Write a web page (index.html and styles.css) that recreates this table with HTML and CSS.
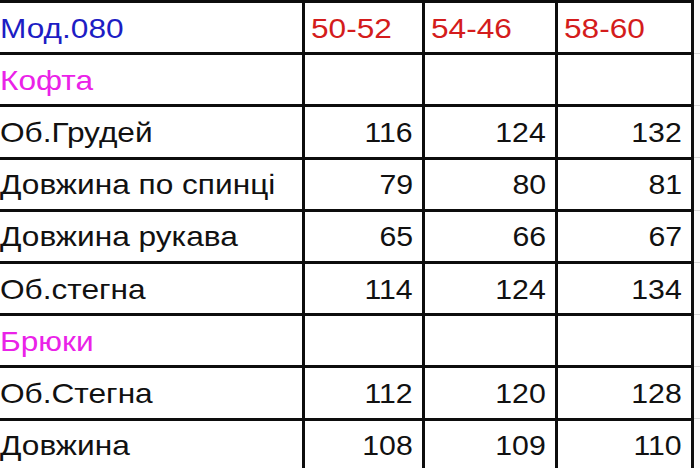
FILE: index.html
```html
<!DOCTYPE html>
<html lang="uk">
<head>
<meta charset="utf-8">
<title>Мод.080</title>
<link rel="stylesheet" href="styles.css">
</head>
<body>
<div class="sheet">
  <div class="grid">
    <div class="cell label model"><span class="t">Мод.080</span></div>
    <div class="cell size"><span class="t">50-52</span></div>
    <div class="cell size"><span class="t">54-46</span></div>
    <div class="cell size"><span class="t">58-60</span></div>

    <div class="cell label section"><span class="t">Кофта</span></div>
    <div class="cell"></div>
    <div class="cell"></div>
    <div class="cell"></div>

    <div class="cell label"><span class="t">Об.Грудей</span></div>
    <div class="cell num"><span class="t">116</span></div>
    <div class="cell num"><span class="t">124</span></div>
    <div class="cell num"><span class="t">132</span></div>

    <div class="cell label"><span class="t">Довжина по спинці</span></div>
    <div class="cell num"><span class="t">79</span></div>
    <div class="cell num"><span class="t">80</span></div>
    <div class="cell num"><span class="t">81</span></div>

    <div class="cell label"><span class="t">Довжина рукава</span></div>
    <div class="cell num"><span class="t">65</span></div>
    <div class="cell num"><span class="t">66</span></div>
    <div class="cell num"><span class="t">67</span></div>

    <div class="cell label"><span class="t">Об.стегна</span></div>
    <div class="cell num"><span class="t">114</span></div>
    <div class="cell num"><span class="t">124</span></div>
    <div class="cell num"><span class="t">134</span></div>

    <div class="cell label section"><span class="t">Брюки</span></div>
    <div class="cell"></div>
    <div class="cell"></div>
    <div class="cell"></div>

    <div class="cell label"><span class="t">Об.Стегна</span></div>
    <div class="cell num"><span class="t">112</span></div>
    <div class="cell num"><span class="t">120</span></div>
    <div class="cell num"><span class="t">128</span></div>

    <div class="cell label"><span class="t">Довжина</span></div>
    <div class="cell num"><span class="t">108</span></div>
    <div class="cell num"><span class="t">109</span></div>
    <div class="cell num"><span class="t">110</span></div>
  </div>
  <div class="filler"></div>
</div>
</body>
</html>
```
FILE: styles.css
```css
html, body {
  margin: 0;
  padding: 0;
  background: #ffffff;
}

body {
  width: 700px;
  height: 468px;
  overflow: hidden;
  font-family: "Liberation Sans", Arial, sans-serif;
}

.sheet {
  display: flex;
  align-items: flex-start;
}

.grid {
  display: grid;
  grid-template-columns: 302px 117px 130px 133px;
  grid-auto-rows: 49.2px;
  gap: 3px;
  padding: 3px 3px 3px 0;
  background: #0d0d0d;
  flex: none;
}

.cell {
  background: #ffffff;
  display: flex;
  align-items: center;
  font-size: 28px;
  color: #111111;
  white-space: nowrap;
  overflow: hidden;
  padding-top: 2px;
}

.t {
  display: block;
  transform-origin: left center;
  transform: scaleX(1.13);
}

.label {
  padding-left: 0;
}

.model {
  color: #1d1dc4;
}

.section {
  color: #ea22e8;
}

.size {
  color: #d41c1c;
  padding-left: 6px;
}

.num {
  justify-content: flex-end;
  padding-right: 9px;
}

.num .t {
  transform-origin: right center;
  transform: scaleX(1.08);
}

.filler {
  flex: 1;
  height: 468px;
  background:
    repeating-linear-gradient(to bottom, #d8d8d8 0, #d8d8d8 1px, transparent 1px, transparent 52.2px) 0 53px / 100% 100% no-repeat,
    #fafafa;
}
```
